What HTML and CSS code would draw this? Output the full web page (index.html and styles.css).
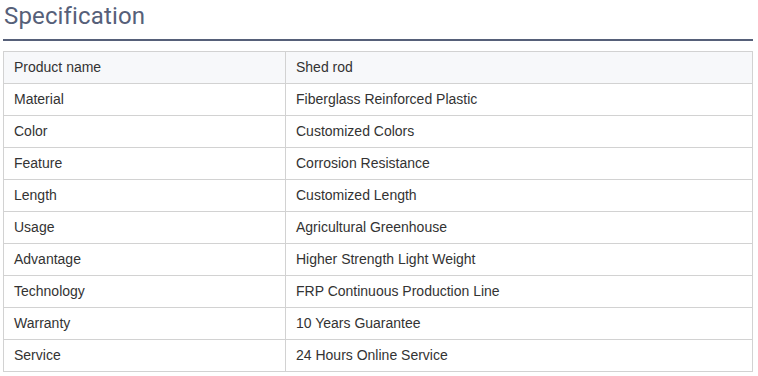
FILE: index.html
```html
<!DOCTYPE html>
<html>
<head>
<meta charset="utf-8">
<link rel="stylesheet" href="styles.css">
</head>
<body>
<div class="spec">
  <h2 class="spec-title">Specification</h2>
  <table class="spec-table">
    <tr class="head"><td class="k">Product name</td><td>Shed rod</td></tr>
    <tr><td class="k">Material</td><td>Fiberglass Reinforced Plastic</td></tr>
    <tr><td class="k">Color</td><td>Customized Colors</td></tr>
    <tr><td class="k">Feature</td><td>Corrosion Resistance</td></tr>
    <tr><td class="k">Length</td><td>Customized Length</td></tr>
    <tr><td class="k">Usage</td><td>Agricultural Greenhouse</td></tr>
    <tr><td class="k">Advantage</td><td>Higher Strength Light Weight</td></tr>
    <tr><td class="k">Technology</td><td>FRP Continuous Production Line</td></tr>
    <tr><td class="k">Warranty</td><td>10 Years Guarantee</td></tr>
    <tr><td class="k">Service</td><td>24 Hours Online Service</td></tr>
  </table>
</div>
</body>
</html>
```
FILE: styles.css
```css
html, body {
  margin: 0;
  padding: 0;
  background: #ffffff;
}
.spec {
  padding: 0 5px 0 3px;
  width: 750px;
}
.spec-title {
  margin: 0;
  font-family: Roboto, "Liberation Sans", sans-serif;
  font-weight: 400;
  font-size: 24px;
  letter-spacing: 0.15px;
  line-height: 32px;
  color: #566079;
  padding: 0 0 0 1px;
  height: 39px;
  border-bottom: 2px solid #566079;
  box-sizing: content-box;
}
.spec-table {
  margin-top: 10px;
  width: 750px;
  border-collapse: collapse;
  font-family: "Liberation Sans", Arial, sans-serif;
  font-size: 14px;
  color: #333333;
}
.spec-table td {
  border: 1px solid #d2d2d2;
  height: 32px;
  padding: 0 10px 2px;
  box-sizing: border-box;
  line-height: 20px;
  vertical-align: middle;
}
.spec-table td.k {
  width: 282px;
}
.spec-table tr.head td {
  background: #f7f8fa;
}
```
